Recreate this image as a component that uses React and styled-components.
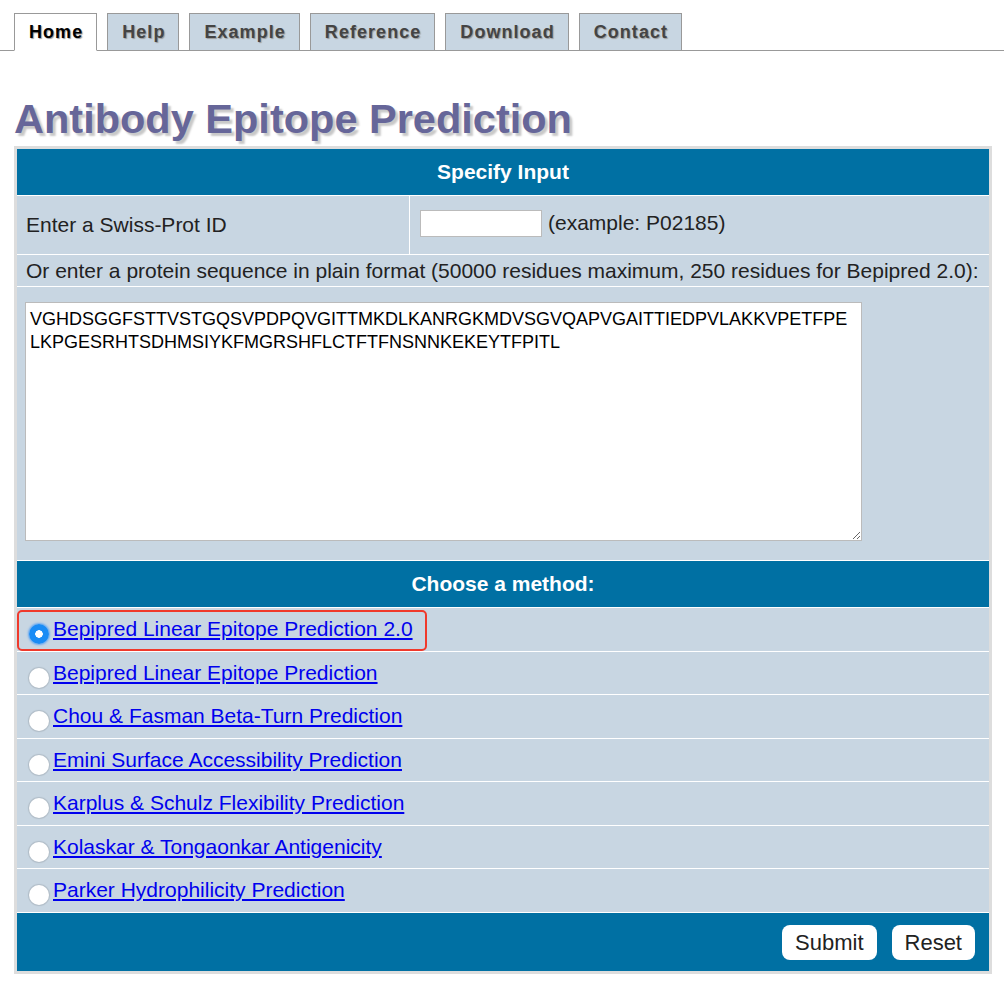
import styled, { createGlobalStyle } from "styled-components";

const GlobalStyle = createGlobalStyle`
  body {
    margin: 0;
    background: #fff;
    font-family: "Liberation Sans", Arial, Helvetica, sans-serif;
  }
`;

const tabs = ["Home", "Help", "Example", "Reference", "Download", "Contact"];

const methods = [
  "Bepipred Linear Epitope Prediction 2.0",
  "Bepipred Linear Epitope Prediction",
  "Chou & Fasman Beta-Turn Prediction",
  "Emini Surface Accessibility Prediction",
  "Karplus & Schulz Flexibility Prediction",
  "Kolaskar & Tongaonkar Antigenicity",
  "Parker Hydrophilicity Prediction",
];

const sequence =
  "VGHDSGGFSTTVSTGQSVPDPQVGITTMKDLKANRGKMDVSGVQAPVGAITTIEDPVLAKKVPETFPE\nLKPGESRHTSDHMSIYKFMGRSHFLCTFTFNSNNKEKEYTFPITL";

export default function App() {
  return (
    <>
      <GlobalStyle />
      <TabBar>
        {tabs.map((t, i) => (
          <Tab key={t} $active={i === 0}>
            {t}
          </Tab>
        ))}
      </TabBar>
      <Title>Antibody Epitope Prediction</Title>
      <FormTable>
        <HeaderRow>Specify Input</HeaderRow>
        <SplitRow>
          <Cell>Enter a Swiss-Prot ID</Cell>
          <Cell>
            <IdInput type="text" />
            <Hint>(example: P02185)</Hint>
          </Cell>
        </SplitRow>
        <TextRow>
          Or enter a protein sequence in plain format (50000 residues maximum,
          250 residues for Bepipred 2.0):
        </TextRow>
        <AreaRow>
          <SeqArea defaultValue={sequence} />
        </AreaRow>
        <HeaderRow>Choose a method:</HeaderRow>
        {methods.map((m, i) => (
          <MethodRow key={m}>
            {i === 0 && <Highlight />}
            <Radio type="radio" name="method" defaultChecked={i === 0} />
            <MethodLink href="#">{m}</MethodLink>
          </MethodRow>
        ))}
        <Footer>
          <Button>Submit</Button>
          <Button>Reset</Button>
        </Footer>
      </FormTable>
    </>
  );
}

const TabBar = styled.div`
  display: flex;
  gap: 10px;
  padding: 13px 0 0 14px;
  border-bottom: 1px solid #999;
  height: 37px;
`;

const Tab = styled.div`
  display: flex;
  align-items: center;
  padding: 0 13px 0 14px;
  height: 36px;
  border: 1px solid #999;
  border-bottom: ${(p) => (p.$active ? "1px solid #fff" : "none")};
  background: ${(p) => (p.$active ? "#fff" : "#c8d6e2")};
  color: ${(p) => (p.$active ? "#000" : "#444")};
  font-weight: bold;
  font-size: 18px;
  letter-spacing: 1.05px;
  text-shadow: 1px 1px 1px #999;
`;

const Title = styled.h1`
  margin: 44px 0 3px 14px;
  font-size: 41.5px;
  line-height: 48px;
  font-weight: bold;
  color: #666699;
  text-shadow: 3px 3px 2px #c8c8c8;
`;

const FormTable = styled.div`
  margin-left: 14px;
  width: 972px;
  border: 3px solid #ddd;
  background: #fff;
  display: flex;
  flex-direction: column;
  gap: 1px;
  font-size: 21px;
  color: #222;
`;

const HeaderRow = styled.div`
  height: 46px;
  display: flex;
  align-items: center;
  justify-content: center;
  background: #0070a3;
  color: #fff;
  font-weight: bold;
`;

const SplitRow = styled.div`
  display: grid;
  grid-template-columns: 392px 1fr;
  gap: 1px;
  height: 58px;
`;

const Cell = styled.div`
  display: flex;
  align-items: center;
  background: #c8d6e2;
  padding-left: 9px;
`;

const IdInput = styled.input`
  width: 122px;
  height: 27px;
  box-sizing: border-box;
  border: 1px solid #bbb;
  background: #fff;
  margin: 0 6px 4px 1px;
`;

const Hint = styled.span`
  margin-bottom: 4px;
`;

const TextRow = styled.div`
  height: 31px;
  display: flex;
  align-items: center;
  background: #c8d6e2;
  padding-left: 9px;
`;

const AreaRow = styled.div`
  background: #c8d6e2;
  padding: 15px 8px 19px;
  height: 273px;
  box-sizing: border-box;
`;

const SeqArea = styled.textarea`
  display: block;
  width: 837px;
  height: 239px;
  box-sizing: border-box;
  border: 1px solid #bbb;
  padding: 5px 4px 4px;
  font-family: "Liberation Sans", Arial, sans-serif;
  font-size: 18px;
  line-height: 23px;
  color: #000;
  resize: both;
`;

const MethodRow = styled.div`
  position: relative;
  height: 42.5px;
  display: flex;
  align-items: center;
  background: #c8d6e2;
`;

const Highlight = styled.div`
  position: absolute;
  left: 0;
  top: 2px;
  width: 410px;
  bottom: 0;
  border: 2px solid #f0392b;
  border-radius: 5px;
  box-sizing: border-box;
  pointer-events: none;
`;

const Radio = styled.input`
  appearance: none;
  width: 20px;
  height: 20px;
  margin: 10px 4px 0 12px;
  border-radius: 50%;
  background: #fff;
  box-shadow: 0 0 1px 1px rgba(0, 0, 0, 0.12);
  &:checked {
    background: radial-gradient(circle, #fff 0 3.5px, #1a8cf5 4px);
    box-shadow: 0 0 2px 1px rgba(40, 140, 255, 0.6);
  }
`;

const MethodLink = styled.a`
  color: #0000ee;
  text-decoration: underline;
`;

const Footer = styled.div`
  height: 58px;
  display: flex;
  align-items: center;
  justify-content: flex-end;
  gap: 15px;
  padding: 2px 14px 0 0;
  box-sizing: border-box;
  background: #0070a3;
`;

const Button = styled.button`
  height: 35px;
  padding: 0 13px;
  border: none;
  border-radius: 8px;
  background: #fff;
  color: #222;
  font-family: "Liberation Sans", Arial, sans-serif;
  font-size: 22px;
`;
